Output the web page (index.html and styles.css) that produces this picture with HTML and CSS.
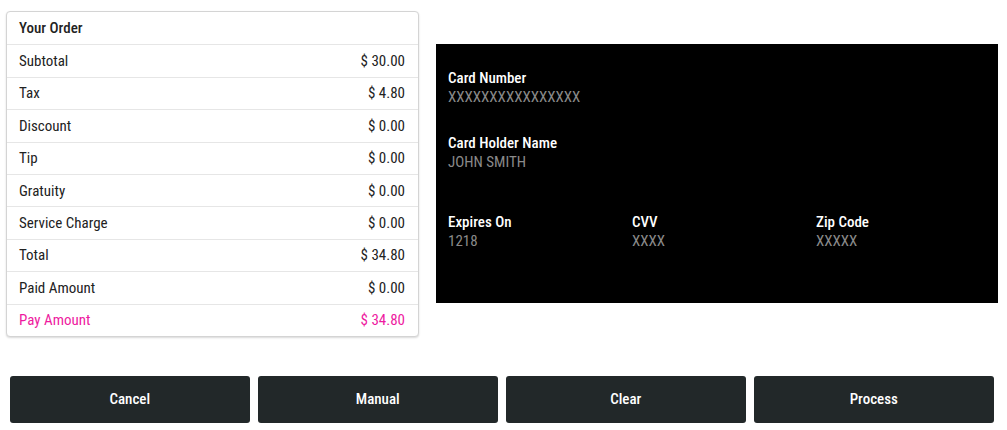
FILE: index.html
```html
<!DOCTYPE html>
<html>
<head>
<meta charset="utf-8">
<link rel="stylesheet" href="styles.css">
</head>
<body>
<div class="page">
  <div class="top">
    <div class="order">
      <div class="row head"><span>Your Order</span></div>
      <div class="row"><span>Subtotal</span><span>$ 30.00</span></div>
      <div class="row"><span>Tax</span><span>$ 4.80</span></div>
      <div class="row"><span>Discount</span><span>$ 0.00</span></div>
      <div class="row"><span>Tip</span><span>$ 0.00</span></div>
      <div class="row"><span>Gratuity</span><span>$ 0.00</span></div>
      <div class="row"><span>Service Charge</span><span>$ 0.00</span></div>
      <div class="row"><span>Total</span><span>$ 34.80</span></div>
      <div class="row"><span>Paid Amount</span><span>$ 0.00</span></div>
      <div class="row pay"><span>Pay Amount</span><span>$ 34.80</span></div>
    </div>
    <div class="card">
      <div class="field f1"><div class="lbl">Card Number</div><div class="val">XXXXXXXXXXXXXXXX</div></div>
      <div class="field f2"><div class="lbl">Card Holder Name</div><div class="val">JOHN SMITH</div></div>
      <div class="cols">
        <div class="field"><div class="lbl">Expires On</div><div class="val">1218</div></div>
        <div class="field"><div class="lbl">CVV</div><div class="val">XXXX</div></div>
        <div class="field"><div class="lbl">Zip Code</div><div class="val">XXXXX</div></div>
      </div>
    </div>
  </div>
  <div class="actions">
    <button class="btn">Cancel</button>
    <button class="btn">Manual</button>
    <button class="btn">Clear</button>
    <button class="btn">Process</button>
  </div>
</div>
</body>
</html>
```
FILE: styles.css
```css
* { box-sizing: border-box; }
html, body { margin: 0; padding: 0; background: #fff; }
body { font-family: Roboto, "Liberation Sans", sans-serif; font-size: 15px; color: #222; font-stretch: 87.5%; }
.page { width: 1007px; padding: 11px 0 0 0; }
.top { display: flex; align-items: center; padding-left: 6px; gap: 17px; }
.order {
  width: 413px;
  border: 1px solid #d4d4d4;
  border-radius: 4px;
  box-shadow: 0 1px 2px rgba(0,0,0,0.15);
  background: #fff;
}
.row {
  height: 32.4px;
  display: flex;
  justify-content: space-between;
  align-items: center;
  padding: 0 13px 0 12px;
  border-top: 1px solid #e6e6e6;
}
.row:first-child { border-top: none; }
.row.head { font-weight: 500; }
.row.pay { color: #ee1aa0; }
.card {
  width: 562px;
  height: 259px;
  background: #000;
  padding: 25px 12px 0 12px;
}
.lbl { color: #fff; font-weight: 500; line-height: 19px; }
.val { color: #8a8a8a; line-height: 19px; }
.f2 { margin-top: 27px; }
.cols { display: grid; grid-template-columns: 184px 184px 184px; margin-top: 41px; }
.actions {
  display: flex;
  gap: 8.5px;
  padding: 39px 0 0 10px;
}
.btn {
  width: 239.5px;
  height: 47px;
  background: #222829;
  color: #fff;
  border: none;
  border-radius: 3px;
  font-family: Roboto, "Liberation Sans", sans-serif;
  font-stretch: 87.5%;
  font-size: 15px;
  font-weight: 500;
}
```
